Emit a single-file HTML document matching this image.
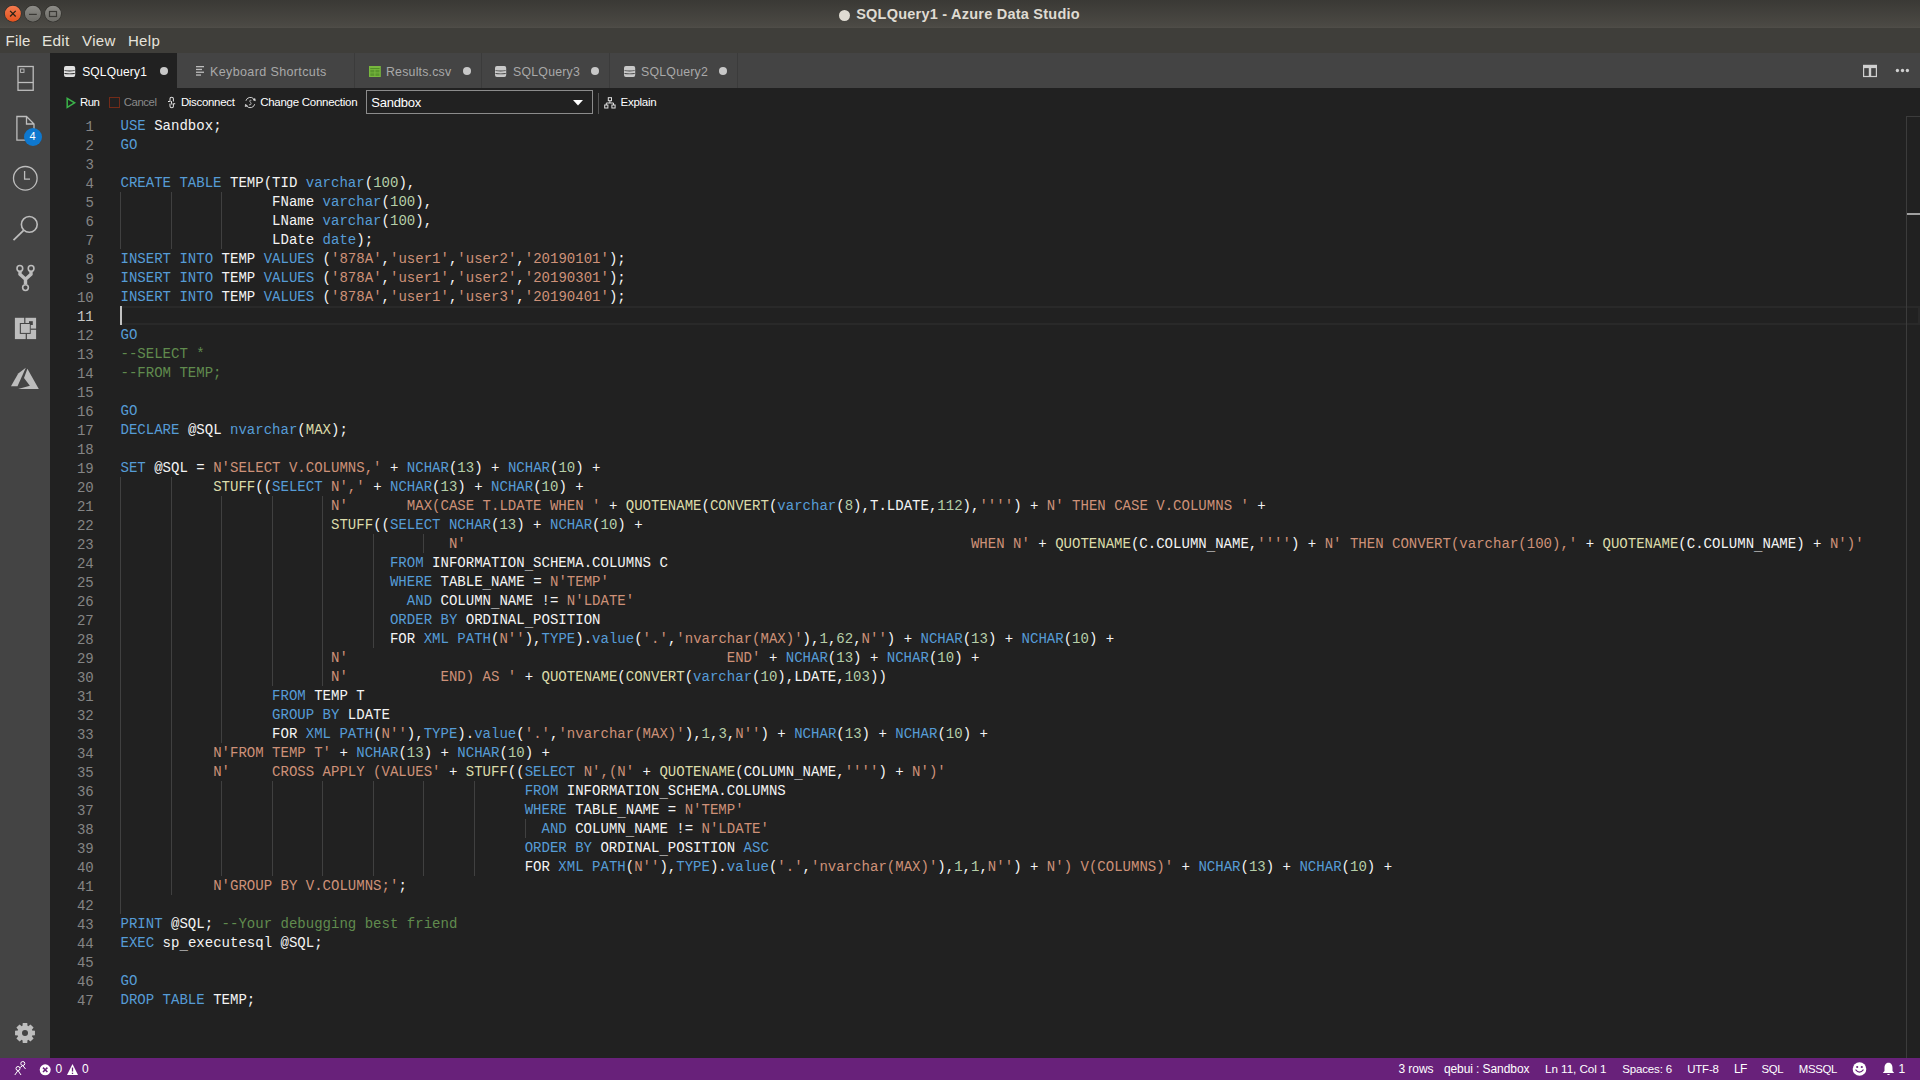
<!DOCTYPE html><html><head><meta charset="utf-8"><style>
*{margin:0;padding:0;box-sizing:border-box}
html,body{width:1920px;height:1080px;overflow:hidden;background:#212121}
body{position:relative;font-family:"Liberation Sans",sans-serif}
.abs{position:absolute}
svg{position:absolute;overflow:visible}
#title{position:absolute;left:0;top:0;width:1920px;height:28px;background:linear-gradient(#3a3935,#4b4944 92%,#504e49)}
#menu{position:absolute;left:0;top:28px;width:1920px;height:25px;background:#3f3e3a}
#act{position:absolute;left:0;top:53px;width:50px;height:1005px;background:#444444}
#tabs{position:absolute;left:50px;top:53px;width:1870px;height:35px;background:#444444}
#status{position:absolute;left:0;top:1058px;width:1920px;height:22px;background:#68217a}
.ui{position:absolute;white-space:pre;color:#fff;font-family:"Liberation Sans",sans-serif}
.ln{position:absolute;left:50.8px;width:43px;text-align:right;height:19px;line-height:19px;font-family:"Liberation Mono",monospace;font-size:14.045px;color:#858585;white-space:pre}
.ln.act{color:#c6c6c6}
.cl{position:absolute;left:120.5px;height:19px;line-height:19px;font-family:"Liberation Mono",monospace;font-size:14.045px;color:#f4f4f4;white-space:pre}
.ig{position:absolute;width:1px;height:19px;background:#404040}
.u{position:relative;top:1.5px}.k{color:#569cd6}.f{color:#dcdcaa}.s{color:#ce9178}.n{color:#b5cea8}.c{color:#608b4e}.i{color:#f4f4f4}
</style></head><body>
<div id="title"></div><div id="menu"></div><div id="act"></div><div id="tabs"></div>
<svg style="left:0;top:0" width="70" height="28" viewBox="0 0 70 28"><defs><linearGradient id="gc" x1="0" y1="0" x2="0" y2="1"><stop offset="0" stop-color="#f37b4f"/><stop offset="1" stop-color="#e4531f"/></linearGradient><linearGradient id="gg" x1="0" y1="0" x2="0" y2="1"><stop offset="0" stop-color="#8e8d88"/><stop offset="1" stop-color="#6c6b66"/></linearGradient></defs><circle cx="12.9" cy="13.7" r="8.6" fill="#2e2d2a"/><circle cx="12.9" cy="13.7" r="8" fill="url(#gc)"/><path d="M10.1 10.9 L15.7 16.5 M15.7 10.9 L10.1 16.5" stroke="#2a2217" stroke-width="1.3"/><circle cx="32.9" cy="13.7" r="8.6" fill="#2e2d2a"/><circle cx="32.9" cy="13.7" r="8" fill="url(#gg)"/><path d="M29 14.4 H36.8" stroke="#3a3935" stroke-width="1.2"/><circle cx="53" cy="13.7" r="8.6" fill="#2e2d2a"/><circle cx="53" cy="13.7" r="8" fill="url(#gg)"/><rect x="49.5" y="11.5" width="7" height="5" fill="none" stroke="#3a3935" stroke-width="1.2"/></svg>
<div class="abs" style="left:838.7px;top:9.5px;width:11.6px;height:11.6px;border-radius:50%;background:#dfdbd2"></div>
<div class="ui" style="left:856.20px;top:3.97px;font-size:14.5px;line-height:20px;color:#dfdbd2;font-weight:bold;letter-spacing:0.229px;">SQLQuery1 - Azure Data Studio</div>
<div class="ui" style="left:5.60px;top:31.00px;font-size:15px;line-height:20px;color:#e6e3dc;font-weight:normal;letter-spacing:0.224px;">File</div>
<div class="ui" style="left:42.00px;top:30.87px;font-size:15.38px;line-height:20px;color:#e6e3dc;font-weight:normal;letter-spacing:0.259px;">Edit</div>
<div class="ui" style="left:82.00px;top:31.00px;font-size:15px;line-height:20px;color:#e6e3dc;font-weight:normal;letter-spacing:0.397px;">View</div>
<div class="ui" style="left:127.90px;top:31.00px;font-size:15px;line-height:20px;color:#e6e3dc;font-weight:normal;letter-spacing:0.331px;">Help</div>
<div class="abs" style="left:50px;top:53px;width:127px;height:35px;background:#212121"></div>
<div class="abs" style="left:354px;top:53px;width:1px;height:35px;background:#3b3b3b"></div>
<div class="abs" style="left:481px;top:53px;width:1px;height:35px;background:#3b3b3b"></div>
<div class="abs" style="left:609px;top:53px;width:1px;height:35px;background:#3b3b3b"></div>
<div class="abs" style="left:737px;top:53px;width:1px;height:35px;background:#3b3b3b"></div>
<svg style="left:64px;top:66px" width="12" height="12" viewBox="0 0 12 12"><rect x="0" y="0" width="11.2" height="11" rx="1.9" fill="#e0e0e0"/><path d="M0.5 4.2 Q5.6 5 10.7 4.2 V5.1 Q5.6 5.9 0.5 5.1 Z" fill="#212121"/><path d="M0.5 7 Q5.6 7.8 10.7 7 V7.9 Q5.6 8.7 0.5 7.9 Z" fill="#212121"/></svg>
<div class="ui" style="left:82.20px;top:61.84px;font-size:12px;line-height:20px;color:#ffffff;font-weight:normal;letter-spacing:0.164px;">SQLQuery1</div>
<div class="abs" style="left:160px;top:66.8px;width:8px;height:8px;border-radius:50%;background:#c8c8c8"></div>
<svg style="left:196px;top:66px" width="9" height="10" viewBox="0 0 9 10"><rect x="0" y="0" width="8" height="1.3" fill="#bdbdbd"/><rect x="0" y="2.8" width="6" height="1.3" fill="#bdbdbd"/><rect x="0" y="5.6" width="8" height="1.3" fill="#bdbdbd"/><rect x="0" y="8.4" width="5" height="1.3" fill="#bdbdbd"/></svg>
<div class="ui" style="left:210.00px;top:61.65px;font-size:12.54px;line-height:20px;color:#a9a9a9;font-weight:normal;letter-spacing:0.365px;">Keyboard Shortcuts</div>
<svg style="left:369px;top:65.8px" width="12" height="11" viewBox="0 0 12 11"><rect x="0" y="0" width="11.8" height="11" fill="#78b83e"/><rect x="1.2" y="2" width="9.4" height="0.9" fill="#4e8a26"/><rect x="1.3" y="3.8" width="4.1" height="2.7" fill="#5a962e"/><rect x="6.4" y="3.8" width="4.1" height="2.7" fill="#5a962e"/><rect x="1.3" y="7.3" width="4.1" height="2.6" fill="#5a962e"/><rect x="6.4" y="7.3" width="4.1" height="2.6" fill="#5a962e"/></svg>
<div class="ui" style="left:386.00px;top:61.72px;font-size:12.35px;line-height:20px;color:#a9a9a9;font-weight:normal;letter-spacing:0.207px;">Results.csv</div>
<div class="abs" style="left:463px;top:66.8px;width:8px;height:8px;border-radius:50%;background:#c8c8c8"></div>
<svg style="left:495px;top:66px" width="12" height="12" viewBox="0 0 12 12"><rect x="0" y="0" width="11.2" height="11" rx="1.9" fill="#c8c8c8"/><path d="M0.5 4.2 Q5.6 5 10.7 4.2 V5.1 Q5.6 5.9 0.5 5.1 Z" fill="#444444"/><path d="M0.5 7 Q5.6 7.8 10.7 7 V7.9 Q5.6 8.7 0.5 7.9 Z" fill="#444444"/></svg>
<div class="ui" style="left:513.00px;top:61.73px;font-size:12.31px;line-height:20px;color:#a9a9a9;font-weight:normal;letter-spacing:0.239px;">SQLQuery3</div>
<div class="abs" style="left:591px;top:66.8px;width:8px;height:8px;border-radius:50%;background:#c8c8c8"></div>
<svg style="left:623.5px;top:66px" width="12" height="12" viewBox="0 0 12 12"><rect x="0" y="0" width="11.2" height="11" rx="1.9" fill="#c8c8c8"/><path d="M0.5 4.2 Q5.6 5 10.7 4.2 V5.1 Q5.6 5.9 0.5 5.1 Z" fill="#444444"/><path d="M0.5 7 Q5.6 7.8 10.7 7 V7.9 Q5.6 8.7 0.5 7.9 Z" fill="#444444"/></svg>
<div class="ui" style="left:641.00px;top:61.73px;font-size:12.31px;line-height:20px;color:#a9a9a9;font-weight:normal;letter-spacing:0.239px;">SQLQuery2</div>
<div class="abs" style="left:719px;top:66.8px;width:8px;height:8px;border-radius:50%;background:#c8c8c8"></div>
<svg style="left:1860px;top:62px" width="20" height="18" viewBox="1860 62 20 18"><rect x="1863" y="64.8" width="14" height="12.3" fill="#cfcfcf"/><rect x="1864.2" y="68.1" width="4.6" height="7.8" fill="#444444"/><rect x="1871.2" y="68.1" width="4.6" height="7.8" fill="#444444"/></svg>
<svg style="left:1890px;top:66px" width="22" height="10" viewBox="1890 66 22 10"><circle cx="1897.4" cy="70.5" r="1.65" fill="#d0d0d0"/><circle cx="1902.5" cy="70.5" r="1.65" fill="#d0d0d0"/><circle cx="1907.4" cy="70.5" r="1.65" fill="#d0d0d0"/></svg>
<svg style="left:66px;top:97px" width="10" height="12" viewBox="0 0 10 12"><path d="M1.2 1.3 L8.6 5.8 L1.2 10.3 Z" fill="none" stroke="#3bb44a" stroke-width="1.5" stroke-linejoin="miter"/></svg>
<div class="ui" style="left:80.10px;top:92.04px;font-size:11.41px;line-height:20px;color:#ffffff;font-weight:normal;letter-spacing:-0.640px;">Run</div>
<div class="abs" style="left:109px;top:97px;width:11px;height:11px;border:1.5px solid #732b18"></div>
<div class="ui" style="left:123.70px;top:92.06px;font-size:11.35px;line-height:20px;color:#8a8a8a;font-weight:normal;letter-spacing:-0.398px;">Cancel</div>
<svg style="left:166px;top:95px" width="12" height="15" viewBox="166 95 12 15"><path d="M170 101.8 V98.8 Q170 97.3 171.5 97.3 Q173.4 97.3 173.4 98.8 V101.6" fill="none" stroke="#dddddd" stroke-width="1.05"/><path d="M173.4 103.4 V106.3 Q173.4 107.8 171.9 107.8 Q170 107.8 170 106.3 V103.4" fill="none" stroke="#dddddd" stroke-width="1.05"/><path d="M168 101.4 H169.8 M173.6 103.8 H175.2 M171.2 101 L172 104.6" fill="none" stroke="#eeeeee" stroke-width="1.05"/></svg>
<div class="ui" style="left:180.90px;top:92.02px;font-size:11.47px;line-height:20px;color:#ffffff;font-weight:normal;letter-spacing:-0.305px;">Disconnect</div>
<svg style="left:242px;top:94px" width="16" height="16" viewBox="242 94 16 16"><g transform="translate(250.3 102.5) scale(0.88) translate(-250.3 -102.5)"><path d="M245.3 100.6 A5.2 5.2 0 0 1 254.2 98.4" fill="none" stroke="#dcdcdc" stroke-width="1.05"/><path d="M255.3 104.4 A5.2 5.2 0 0 1 246.3 106.6" fill="none" stroke="#dcdcdc" stroke-width="1.05"/><path d="M253.5 99.5 L256 100.5 L255.6 98 Z M245 104.5 L244.5 107 L247 106.5 Z" fill="#dcdcdc" stroke="#dcdcdc" stroke-width="0.8"/><path d="M251.5 100 Q250.2 99.3 249.8 100.6 Q249.6 101.8 250.6 102.4 Q251.6 103.4 250.8 104.8 Q250 105.6 248.8 105" fill="none" stroke="#c8c8c8" stroke-width="1"/></g></svg>
<div class="ui" style="left:260.20px;top:92.01px;font-size:11.51px;line-height:20px;color:#ffffff;font-weight:normal;letter-spacing:-0.266px;">Change Connection</div>
<div class="abs" style="left:366px;top:90px;width:227px;height:24px;border:1px solid #8c8c8c;background:#212121"></div>
<div class="ui" style="left:371.30px;top:93.19px;font-size:13px;line-height:20px;color:#ffffff;font-weight:normal;letter-spacing:-0.237px;">Sandbox</div>
<svg style="left:572px;top:99px" width="12" height="8" viewBox="0 0 12 8"><path d="M1 1 H11 L6 6.5 Z" fill="#ffffff"/></svg>
<div class="abs" style="left:598px;top:93px;width:1px;height:21px;background:#555"></div>
<svg style="left:604px;top:96.5px" width="12" height="12" viewBox="0 0 12 12"><rect x="4.3" y="0.7" width="3.2" height="3" fill="none" stroke="#e0e0e0" stroke-width="1"/><rect x="0.7" y="8" width="3.2" height="3" fill="none" stroke="#e0e0e0" stroke-width="1"/><rect x="7.9" y="8" width="3.2" height="3" fill="none" stroke="#e0e0e0" stroke-width="1"/><path d="M5.9 3.7 V6 M2.3 8 V6 H9.5 V8" fill="none" stroke="#e0e0e0" stroke-width="1"/></svg>
<div class="ui" style="left:620.50px;top:92.00px;font-size:11.54px;line-height:20px;color:#ffffff;font-weight:normal;letter-spacing:-0.268px;">Explain</div>
<div class="abs" style="left:120px;top:306px;width:1800px;height:19px;border:2px solid #292929"></div>
<div class="ln" style="top:118px">1</div>
<div class="cl" style="top:117px"><span class="k">USE </span><span class="i">Sandbox</span>;</div>
<div class="ln" style="top:137px">2</div>
<div class="cl" style="top:136px"><span class="k">GO</span></div>
<div class="ln" style="top:156px">3</div>
<div class="cl" style="top:155px"></div>
<div class="ln" style="top:175px">4</div>
<div class="cl" style="top:174px"><span class="k">CREATE TABLE </span><span class="i">TEMP</span>(<span class="i">TID </span><span class="k">varchar</span>(<span class="n">100</span>),</div>
<div class="ln" style="top:194px">5</div>
<div class="ig" style="top:192px;left:120px"></div>
<div class="ig" style="top:192px;left:171px"></div>
<div class="ig" style="top:192px;left:221px"></div>
<div class="cl" style="top:193px">                  <span class="i">FName </span><span class="k">varchar</span>(<span class="n">100</span>),</div>
<div class="ln" style="top:213px">6</div>
<div class="ig" style="top:211px;left:120px"></div>
<div class="ig" style="top:211px;left:171px"></div>
<div class="ig" style="top:211px;left:221px"></div>
<div class="cl" style="top:212px">                  <span class="i">LName </span><span class="k">varchar</span>(<span class="n">100</span>),</div>
<div class="ln" style="top:232px">7</div>
<div class="ig" style="top:230px;left:120px"></div>
<div class="ig" style="top:230px;left:171px"></div>
<div class="ig" style="top:230px;left:221px"></div>
<div class="cl" style="top:231px">                  <span class="i">LDate </span><span class="k">date</span>);</div>
<div class="ln" style="top:251px">8</div>
<div class="cl" style="top:250px"><span class="k">INSERT INTO </span><span class="i">TEMP </span><span class="k">VALUES </span>(<span class="s">&#x27;878A&#x27;</span>,<span class="s">&#x27;user1&#x27;</span>,<span class="s">&#x27;user2&#x27;</span>,<span class="s">&#x27;20190101&#x27;</span>);</div>
<div class="ln" style="top:270px">9</div>
<div class="cl" style="top:269px"><span class="k">INSERT INTO </span><span class="i">TEMP </span><span class="k">VALUES </span>(<span class="s">&#x27;878A&#x27;</span>,<span class="s">&#x27;user1&#x27;</span>,<span class="s">&#x27;user2&#x27;</span>,<span class="s">&#x27;20190301&#x27;</span>);</div>
<div class="ln" style="top:289px">10</div>
<div class="cl" style="top:288px"><span class="k">INSERT INTO </span><span class="i">TEMP </span><span class="k">VALUES </span>(<span class="s">&#x27;878A&#x27;</span>,<span class="s">&#x27;user1&#x27;</span>,<span class="s">&#x27;user3&#x27;</span>,<span class="s">&#x27;20190401&#x27;</span>);</div>
<div class="ln act" style="top:308px">11</div>
<div class="cl" style="top:307px"></div>
<div class="ln" style="top:327px">12</div>
<div class="cl" style="top:326px"><span class="k">GO</span></div>
<div class="ln" style="top:346px">13</div>
<div class="cl" style="top:345px"><span class="c">--SELECT *</span></div>
<div class="ln" style="top:365px">14</div>
<div class="cl" style="top:364px"><span class="c">--FROM TEMP;</span></div>
<div class="ln" style="top:384px">15</div>
<div class="cl" style="top:383px"></div>
<div class="ln" style="top:403px">16</div>
<div class="cl" style="top:402px"><span class="k">GO</span></div>
<div class="ln" style="top:422px">17</div>
<div class="cl" style="top:421px"><span class="k">DECLARE </span><span class="i">@SQL </span><span class="k">nvarchar</span>(<span class="f">MAX</span>);</div>
<div class="ln" style="top:441px">18</div>
<div class="cl" style="top:440px"></div>
<div class="ln" style="top:460px">19</div>
<div class="cl" style="top:459px"><span class="k">SET </span><span class="i">@SQL </span>= <span class="s">N&#x27;SELECT V.COLUMNS,&#x27; </span>+ <span class="k">NCHAR</span>(<span class="n">13</span>) + <span class="k">NCHAR</span>(<span class="n">10</span>) +</div>
<div class="ln" style="top:479px">20</div>
<div class="ig" style="top:477px;left:120px"></div>
<div class="ig" style="top:477px;left:171px"></div>
<div class="cl" style="top:478px">           <span class="f">STUFF</span>((<span class="k">SELECT </span><span class="s">N&#x27;,&#x27; </span>+ <span class="k">NCHAR</span>(<span class="n">13</span>) + <span class="k">NCHAR</span>(<span class="n">10</span>) +</div>
<div class="ln" style="top:498px">21</div>
<div class="ig" style="top:496px;left:120px"></div>
<div class="ig" style="top:496px;left:171px"></div>
<div class="ig" style="top:496px;left:221px"></div>
<div class="ig" style="top:496px;left:272px"></div>
<div class="ig" style="top:496px;left:322px"></div>
<div class="cl" style="top:497px">                         <span class="s">N&#x27;       MAX(CASE T.LDATE WHEN &#x27; </span>+ <span class="f">QUOTENAME</span>(<span class="f">CONVERT</span>(<span class="k">varchar</span>(<span class="n">8</span>),<span class="i">T</span>.<span class="i">LDATE</span>,<span class="n">112</span>),<span class="s">&#x27;&#x27;&#x27;&#x27;</span>) + <span class="s">N&#x27; THEN CASE V.COLUMNS &#x27; </span>+</div>
<div class="ln" style="top:517px">22</div>
<div class="ig" style="top:515px;left:120px"></div>
<div class="ig" style="top:515px;left:171px"></div>
<div class="ig" style="top:515px;left:221px"></div>
<div class="ig" style="top:515px;left:272px"></div>
<div class="ig" style="top:515px;left:322px"></div>
<div class="cl" style="top:516px">                         <span class="f">STUFF</span>((<span class="k">SELECT NCHAR</span>(<span class="n">13</span>) + <span class="k">NCHAR</span>(<span class="n">10</span>) +</div>
<div class="ln" style="top:536px">23</div>
<div class="ig" style="top:534px;left:120px"></div>
<div class="ig" style="top:534px;left:171px"></div>
<div class="ig" style="top:534px;left:221px"></div>
<div class="ig" style="top:534px;left:272px"></div>
<div class="ig" style="top:534px;left:322px"></div>
<div class="ig" style="top:534px;left:373px"></div>
<div class="ig" style="top:534px;left:423px"></div>
<div class="cl" style="top:535px">                                       <span class="s">N&#x27;                                                            WHEN N&#x27; </span>+ <span class="f">QUOTENAME</span>(<span class="i">C</span>.<span class="i">COLUMN<span class="u">_</span>NAME</span>,<span class="s">&#x27;&#x27;&#x27;&#x27;</span>) + <span class="s">N&#x27; THEN CONVERT(varchar(100),&#x27; </span>+ <span class="f">QUOTENAME</span>(<span class="i">C</span>.<span class="i">COLUMN<span class="u">_</span>NAME</span>) + <span class="s">N&#x27;)&#x27;</span></div>
<div class="ln" style="top:555px">24</div>
<div class="ig" style="top:553px;left:120px"></div>
<div class="ig" style="top:553px;left:171px"></div>
<div class="ig" style="top:553px;left:221px"></div>
<div class="ig" style="top:553px;left:272px"></div>
<div class="ig" style="top:553px;left:322px"></div>
<div class="ig" style="top:553px;left:373px"></div>
<div class="cl" style="top:554px">                                <span class="k">FROM </span><span class="i">INFORMATION<span class="u">_</span>SCHEMA</span>.<span class="i">COLUMNS C</span></div>
<div class="ln" style="top:574px">25</div>
<div class="ig" style="top:572px;left:120px"></div>
<div class="ig" style="top:572px;left:171px"></div>
<div class="ig" style="top:572px;left:221px"></div>
<div class="ig" style="top:572px;left:272px"></div>
<div class="ig" style="top:572px;left:322px"></div>
<div class="ig" style="top:572px;left:373px"></div>
<div class="cl" style="top:573px">                                <span class="k">WHERE </span><span class="i">TABLE<span class="u">_</span>NAME </span>= <span class="s">N&#x27;TEMP&#x27;</span></div>
<div class="ln" style="top:593px">26</div>
<div class="ig" style="top:591px;left:120px"></div>
<div class="ig" style="top:591px;left:171px"></div>
<div class="ig" style="top:591px;left:221px"></div>
<div class="ig" style="top:591px;left:272px"></div>
<div class="ig" style="top:591px;left:322px"></div>
<div class="ig" style="top:591px;left:373px"></div>
<div class="cl" style="top:592px">                                  <span class="k">AND </span><span class="i">COLUMN<span class="u">_</span>NAME </span>!= <span class="s">N&#x27;LDATE&#x27;</span></div>
<div class="ln" style="top:612px">27</div>
<div class="ig" style="top:610px;left:120px"></div>
<div class="ig" style="top:610px;left:171px"></div>
<div class="ig" style="top:610px;left:221px"></div>
<div class="ig" style="top:610px;left:272px"></div>
<div class="ig" style="top:610px;left:322px"></div>
<div class="ig" style="top:610px;left:373px"></div>
<div class="cl" style="top:611px">                                <span class="k">ORDER BY </span><span class="i">ORDINAL<span class="u">_</span>POSITION</span></div>
<div class="ln" style="top:631px">28</div>
<div class="ig" style="top:629px;left:120px"></div>
<div class="ig" style="top:629px;left:171px"></div>
<div class="ig" style="top:629px;left:221px"></div>
<div class="ig" style="top:629px;left:272px"></div>
<div class="ig" style="top:629px;left:322px"></div>
<div class="ig" style="top:629px;left:373px"></div>
<div class="cl" style="top:630px">                                <span class="i">FOR </span><span class="k">XML PATH</span>(<span class="s">N&#x27;&#x27;</span>),<span class="k">TYPE</span>).<span class="k">value</span>(<span class="s">&#x27;.&#x27;</span>,<span class="s">&#x27;nvarchar(MAX)&#x27;</span>),<span class="n">1</span>,<span class="n">62</span>,<span class="s">N&#x27;&#x27;</span>) + <span class="k">NCHAR</span>(<span class="n">13</span>) + <span class="k">NCHAR</span>(<span class="n">10</span>) +</div>
<div class="ln" style="top:650px">29</div>
<div class="ig" style="top:648px;left:120px"></div>
<div class="ig" style="top:648px;left:171px"></div>
<div class="ig" style="top:648px;left:221px"></div>
<div class="ig" style="top:648px;left:272px"></div>
<div class="ig" style="top:648px;left:322px"></div>
<div class="cl" style="top:649px">                         <span class="s">N&#x27;                                             END&#x27; </span>+ <span class="k">NCHAR</span>(<span class="n">13</span>) + <span class="k">NCHAR</span>(<span class="n">10</span>) +</div>
<div class="ln" style="top:669px">30</div>
<div class="ig" style="top:667px;left:120px"></div>
<div class="ig" style="top:667px;left:171px"></div>
<div class="ig" style="top:667px;left:221px"></div>
<div class="ig" style="top:667px;left:272px"></div>
<div class="ig" style="top:667px;left:322px"></div>
<div class="cl" style="top:668px">                         <span class="s">N&#x27;           END) AS &#x27; </span>+ <span class="f">QUOTENAME</span>(<span class="f">CONVERT</span>(<span class="k">varchar</span>(<span class="n">10</span>),<span class="i">LDATE</span>,<span class="n">103</span>))</div>
<div class="ln" style="top:688px">31</div>
<div class="ig" style="top:686px;left:120px"></div>
<div class="ig" style="top:686px;left:171px"></div>
<div class="ig" style="top:686px;left:221px"></div>
<div class="cl" style="top:687px">                  <span class="k">FROM </span><span class="i">TEMP T</span></div>
<div class="ln" style="top:707px">32</div>
<div class="ig" style="top:705px;left:120px"></div>
<div class="ig" style="top:705px;left:171px"></div>
<div class="ig" style="top:705px;left:221px"></div>
<div class="cl" style="top:706px">                  <span class="k">GROUP BY </span><span class="i">LDATE</span></div>
<div class="ln" style="top:726px">33</div>
<div class="ig" style="top:724px;left:120px"></div>
<div class="ig" style="top:724px;left:171px"></div>
<div class="ig" style="top:724px;left:221px"></div>
<div class="cl" style="top:725px">                  <span class="i">FOR </span><span class="k">XML PATH</span>(<span class="s">N&#x27;&#x27;</span>),<span class="k">TYPE</span>).<span class="k">value</span>(<span class="s">&#x27;.&#x27;</span>,<span class="s">&#x27;nvarchar(MAX)&#x27;</span>),<span class="n">1</span>,<span class="n">3</span>,<span class="s">N&#x27;&#x27;</span>) + <span class="k">NCHAR</span>(<span class="n">13</span>) + <span class="k">NCHAR</span>(<span class="n">10</span>) +</div>
<div class="ln" style="top:745px">34</div>
<div class="ig" style="top:743px;left:120px"></div>
<div class="ig" style="top:743px;left:171px"></div>
<div class="cl" style="top:744px">           <span class="s">N&#x27;FROM TEMP T&#x27; </span>+ <span class="k">NCHAR</span>(<span class="n">13</span>) + <span class="k">NCHAR</span>(<span class="n">10</span>) +</div>
<div class="ln" style="top:764px">35</div>
<div class="ig" style="top:762px;left:120px"></div>
<div class="ig" style="top:762px;left:171px"></div>
<div class="cl" style="top:763px">           <span class="s">N&#x27;     CROSS APPLY (VALUES&#x27; </span>+ <span class="f">STUFF</span>((<span class="k">SELECT </span><span class="s">N&#x27;,(N&#x27; </span>+ <span class="f">QUOTENAME</span>(<span class="i">COLUMN<span class="u">_</span>NAME</span>,<span class="s">&#x27;&#x27;&#x27;&#x27;</span>) + <span class="s">N&#x27;)&#x27;</span></div>
<div class="ln" style="top:783px">36</div>
<div class="ig" style="top:781px;left:120px"></div>
<div class="ig" style="top:781px;left:171px"></div>
<div class="ig" style="top:781px;left:221px"></div>
<div class="ig" style="top:781px;left:272px"></div>
<div class="ig" style="top:781px;left:322px"></div>
<div class="ig" style="top:781px;left:373px"></div>
<div class="ig" style="top:781px;left:423px"></div>
<div class="ig" style="top:781px;left:474px"></div>
<div class="cl" style="top:782px">                                                <span class="k">FROM </span><span class="i">INFORMATION<span class="u">_</span>SCHEMA</span>.<span class="i">COLUMNS</span></div>
<div class="ln" style="top:802px">37</div>
<div class="ig" style="top:800px;left:120px"></div>
<div class="ig" style="top:800px;left:171px"></div>
<div class="ig" style="top:800px;left:221px"></div>
<div class="ig" style="top:800px;left:272px"></div>
<div class="ig" style="top:800px;left:322px"></div>
<div class="ig" style="top:800px;left:373px"></div>
<div class="ig" style="top:800px;left:423px"></div>
<div class="ig" style="top:800px;left:474px"></div>
<div class="cl" style="top:801px">                                                <span class="k">WHERE </span><span class="i">TABLE<span class="u">_</span>NAME </span>= <span class="s">N&#x27;TEMP&#x27;</span></div>
<div class="ln" style="top:821px">38</div>
<div class="ig" style="top:819px;left:120px"></div>
<div class="ig" style="top:819px;left:171px"></div>
<div class="ig" style="top:819px;left:221px"></div>
<div class="ig" style="top:819px;left:272px"></div>
<div class="ig" style="top:819px;left:322px"></div>
<div class="ig" style="top:819px;left:373px"></div>
<div class="ig" style="top:819px;left:423px"></div>
<div class="ig" style="top:819px;left:474px"></div>
<div class="ig" style="top:819px;left:525px"></div>
<div class="cl" style="top:820px">                                                  <span class="k">AND </span><span class="i">COLUMN<span class="u">_</span>NAME </span>!= <span class="s">N&#x27;LDATE&#x27;</span></div>
<div class="ln" style="top:840px">39</div>
<div class="ig" style="top:838px;left:120px"></div>
<div class="ig" style="top:838px;left:171px"></div>
<div class="ig" style="top:838px;left:221px"></div>
<div class="ig" style="top:838px;left:272px"></div>
<div class="ig" style="top:838px;left:322px"></div>
<div class="ig" style="top:838px;left:373px"></div>
<div class="ig" style="top:838px;left:423px"></div>
<div class="ig" style="top:838px;left:474px"></div>
<div class="cl" style="top:839px">                                                <span class="k">ORDER BY </span><span class="i">ORDINAL<span class="u">_</span>POSITION </span><span class="k">ASC</span></div>
<div class="ln" style="top:859px">40</div>
<div class="ig" style="top:857px;left:120px"></div>
<div class="ig" style="top:857px;left:171px"></div>
<div class="ig" style="top:857px;left:221px"></div>
<div class="ig" style="top:857px;left:272px"></div>
<div class="ig" style="top:857px;left:322px"></div>
<div class="ig" style="top:857px;left:373px"></div>
<div class="ig" style="top:857px;left:423px"></div>
<div class="ig" style="top:857px;left:474px"></div>
<div class="cl" style="top:858px">                                                <span class="i">FOR </span><span class="k">XML PATH</span>(<span class="s">N&#x27;&#x27;</span>),<span class="k">TYPE</span>).<span class="k">value</span>(<span class="s">&#x27;.&#x27;</span>,<span class="s">&#x27;nvarchar(MAX)&#x27;</span>),<span class="n">1</span>,<span class="n">1</span>,<span class="s">N&#x27;&#x27;</span>) + <span class="s">N&#x27;) V(COLUMNS)&#x27; </span>+ <span class="k">NCHAR</span>(<span class="n">13</span>) + <span class="k">NCHAR</span>(<span class="n">10</span>) +</div>
<div class="ln" style="top:878px">41</div>
<div class="ig" style="top:876px;left:120px"></div>
<div class="ig" style="top:876px;left:171px"></div>
<div class="cl" style="top:877px">           <span class="s">N&#x27;GROUP BY V.COLUMNS;&#x27;</span>;</div>
<div class="ln" style="top:897px">42</div>
<div class="ig" style="top:895px;left:120px"></div>
<div class="cl" style="top:896px"></div>
<div class="ln" style="top:916px">43</div>
<div class="cl" style="top:915px"><span class="k">PRINT </span><span class="i">@SQL</span>; <span class="c">--Your debugging best friend</span></div>
<div class="ln" style="top:935px">44</div>
<div class="cl" style="top:934px"><span class="k">EXEC </span><span class="i">sp<span class="u">_</span>executesql @SQL</span>;</div>
<div class="ln" style="top:954px">45</div>
<div class="cl" style="top:953px"></div>
<div class="ln" style="top:973px">46</div>
<div class="cl" style="top:972px"><span class="k">GO</span></div>
<div class="ln" style="top:992px">47</div>
<div class="cl" style="top:991px"><span class="k">DROP TABLE </span><span class="i">TEMP</span>;</div>
<div class="abs" style="left:120px;top:306px;width:2px;height:19px;background:#c2c2c2"></div>
<div class="abs" style="left:1906px;top:116px;width:1px;height:942px;background:#3c3c3c"></div>
<div class="abs" style="left:1906px;top:116px;width:14px;height:1px;background:#3c3c3c"></div>
<div class="abs" style="left:1907px;top:213px;width:13px;height:2px;background:#a0a0a0"></div>
<svg style="left:0;top:53px" width="50" height="360" viewBox="0 53 50 360"><rect x="18" y="66.5" width="15.2" height="23.8" fill="none" stroke="#bdbdbd" stroke-width="1.3"/><path d="M18 82.5 H33.2" stroke="#bdbdbd" stroke-width="1.3"/><rect x="20.6" y="69" width="3.4" height="3.4" fill="none" stroke="#bdbdbd" stroke-width="0.9"/><path d="M16.9 116.5 H26.5 L34 124 V140.2 H16.9 Z M26.5 116.5 V124 H34" fill="none" stroke="#bdbdbd" stroke-width="1.3" stroke-linejoin="miter"/><circle cx="25.3" cy="178.3" r="11.8" fill="none" stroke="#bdbdbd" stroke-width="1.3"/><path d="M24.6 171 V179.2 H30" fill="none" stroke="#bdbdbd" stroke-width="1.3"/><circle cx="29.3" cy="224.4" r="7.9" fill="none" stroke="#bdbdbd" stroke-width="1.6"/><path d="M23.6 230.3 L13.5 240.2" stroke="#bdbdbd" stroke-width="1.8"/><circle cx="19.86" cy="268.4" r="2.85" fill="none" stroke="#bdbdbd" stroke-width="1.6"/><circle cx="31.1" cy="268.4" r="2.85" fill="none" stroke="#bdbdbd" stroke-width="1.6"/><circle cx="25.5" cy="287.6" r="2.85" fill="none" stroke="#bdbdbd" stroke-width="1.6"/><path d="M20 271.5 V274.3 L25.5 279.2 V284 M31 271.5 V274.3 L25.5 279.2" fill="none" stroke="#bdbdbd" stroke-width="3.4" stroke-linejoin="miter"/><rect x="14.9" y="317.8" width="21.2" height="21.3" fill="#bdbdbd"/><rect x="24.2" y="317" width="1.2" height="6.5" fill="#444"/><rect x="30.5" y="328.6" width="6.5" height="1.2" fill="#444"/><rect x="25.7" y="333.5" width="1.2" height="6.5" fill="#444"/><rect x="29" y="321.2" width="3.8" height="3.8" fill="#444"/><rect x="19.8" y="323" width="10.9" height="10.9" fill="#444"/><rect x="20.9" y="324" width="8.9" height="8.9" fill="#bdbdbd"/><path d="M25.8 367.8 L18.2 373.6 L11 386.3 L17.5 386.3 Z" fill="#bdbdbd"/><path d="M27.4 368.8 L38.8 389 L18.1 389 L29.9 385.8 L24 378.1 Z" fill="#bdbdbd"/></svg>
<div class="abs" style="left:24px;top:128px;width:18px;height:18px;border-radius:50%;background:#0e78cf"></div>
<div class="ui" style="left:29.50px;top:126.39px;font-size:11px;line-height:20px;color:#ffffff;font-weight:normal;letter-spacing:0.000px;">4</div>
<svg style="left:0;top:1010px" width="50" height="46" viewBox="0 1010 50 46"><path d="M34.95 1030.77 L34.95 1035.23 L32.16 1035.53 L31.86 1036.27 L33.61 1038.46 L30.46 1041.61 L28.27 1039.86 L27.53 1040.16 L27.23 1042.95 L22.77 1042.95 L22.47 1040.16 L21.73 1039.86 L19.54 1041.61 L16.39 1038.46 L18.14 1036.27 L17.84 1035.53 L15.05 1035.23 L15.05 1030.77 L17.84 1030.47 L18.14 1029.73 L16.39 1027.54 L19.54 1024.39 L21.73 1026.14 L22.47 1025.84 L22.77 1023.05 L27.23 1023.05 L27.53 1025.84 L28.27 1026.14 L30.46 1024.39 L33.61 1027.54 L31.86 1029.73 L32.16 1030.47 Z" fill="#bdbdbd"/><circle cx="25" cy="1033" r="3" fill="#444"/></svg>
<div id="status"></div>
<svg style="left:14px;top:1061px" width="14" height="15" viewBox="0 0 14 15"><circle cx="4" cy="7.5" r="2" fill="none" stroke="#fff" stroke-width="1"/><path d="M0.8 14 L4 9.5 L7 14" fill="none" stroke="#fff" stroke-width="1"/><circle cx="8.8" cy="2.5" r="2" fill="none" stroke="#fff" stroke-width="1"/><path d="M6.2 6.5 L8.8 4.5 L11.5 8" fill="none" stroke="#fff" stroke-width="1"/></svg>
<svg style="left:39px;top:1064px" width="12" height="12" viewBox="0 0 12 12"><circle cx="6.2" cy="5.8" r="5.5" fill="#fff"/><path d="M4 3.6 L8.4 8 M8.4 3.6 L4 8" stroke="#68217a" stroke-width="1.5"/></svg>
<div class="ui" style="left:55.40px;top:1059.14px;font-size:12px;line-height:20px;color:#ffffff;font-weight:normal;letter-spacing:0.000px;">0</div>
<svg style="left:67px;top:1064px" width="12" height="12" viewBox="0 0 12 12"><path d="M5.5 0 L11 11 H0 Z" fill="#fff"/><path d="M5.5 3.5 V7.5 M5.5 8.8 V10" stroke="#68217a" stroke-width="1.3"/></svg>
<div class="ui" style="left:82.00px;top:1059.14px;font-size:12px;line-height:20px;color:#ffffff;font-weight:normal;letter-spacing:0.000px;">0</div>
<div class="ui" style="left:1398.40px;top:1058.74px;font-size:12px;line-height:20px;color:#ffffff;font-weight:normal;letter-spacing:-0.029px;">3 rows</div>
<div class="ui" style="left:1443.90px;top:1058.74px;font-size:12px;line-height:20px;color:#ffffff;font-weight:normal;letter-spacing:-0.081px;">qebui : Sandbox</div>
<div class="ui" style="left:1545.00px;top:1058.84px;font-size:11.7px;line-height:20px;color:#ffffff;font-weight:normal;letter-spacing:-0.060px;">Ln 11, Col 1</div>
<div class="ui" style="left:1622.20px;top:1058.90px;font-size:11.53px;line-height:20px;color:#ffffff;font-weight:normal;letter-spacing:-0.151px;">Spaces: 6</div>
<div class="ui" style="left:1687.30px;top:1058.93px;font-size:11.44px;line-height:20px;color:#ffffff;font-weight:normal;letter-spacing:-0.210px;">UTF-8</div>
<div class="ui" style="left:1734.00px;top:1058.74px;font-size:12px;line-height:20px;color:#ffffff;font-weight:normal;letter-spacing:-0.600px;">LF</div>
<div class="ui" style="left:1761.50px;top:1058.96px;font-size:11.36px;line-height:20px;color:#ffffff;font-weight:normal;letter-spacing:-0.306px;">SQL</div>
<div class="ui" style="left:1798.80px;top:1058.95px;font-size:11.4px;line-height:20px;color:#ffffff;font-weight:normal;letter-spacing:-0.336px;">MSSQL</div>
<div class="ui" style="left:1898.60px;top:1058.74px;font-size:12px;line-height:20px;color:#ffffff;font-weight:normal;letter-spacing:0.000px;">1</div>
<svg style="left:1852px;top:1062px" width="16" height="14" viewBox="0 0 16 14"><circle cx="7.5" cy="7" r="6.8" fill="#fff"/><circle cx="5.2" cy="5" r="1.1" fill="#68217a"/><circle cx="9.8" cy="5" r="1.1" fill="#68217a"/><path d="M3.5 7.6 Q7.5 12.5 11.5 7.6" fill="none" stroke="#68217a" stroke-width="1.2"/></svg>
<svg style="left:1882px;top:1062px" width="14" height="14" viewBox="0 0 14 14"><path d="M6.5 0.8 C3.5 0.8 2.5 3.5 2.5 6 V9 L0.8 11 H12.2 L10.5 9 V6 C10.5 3.5 9.5 0.8 6.5 0.8 Z" fill="#fff"/><path d="M5 12 A1.6 1.6 0 0 0 8 12 Z" fill="#fff"/></svg>
</body></html>
